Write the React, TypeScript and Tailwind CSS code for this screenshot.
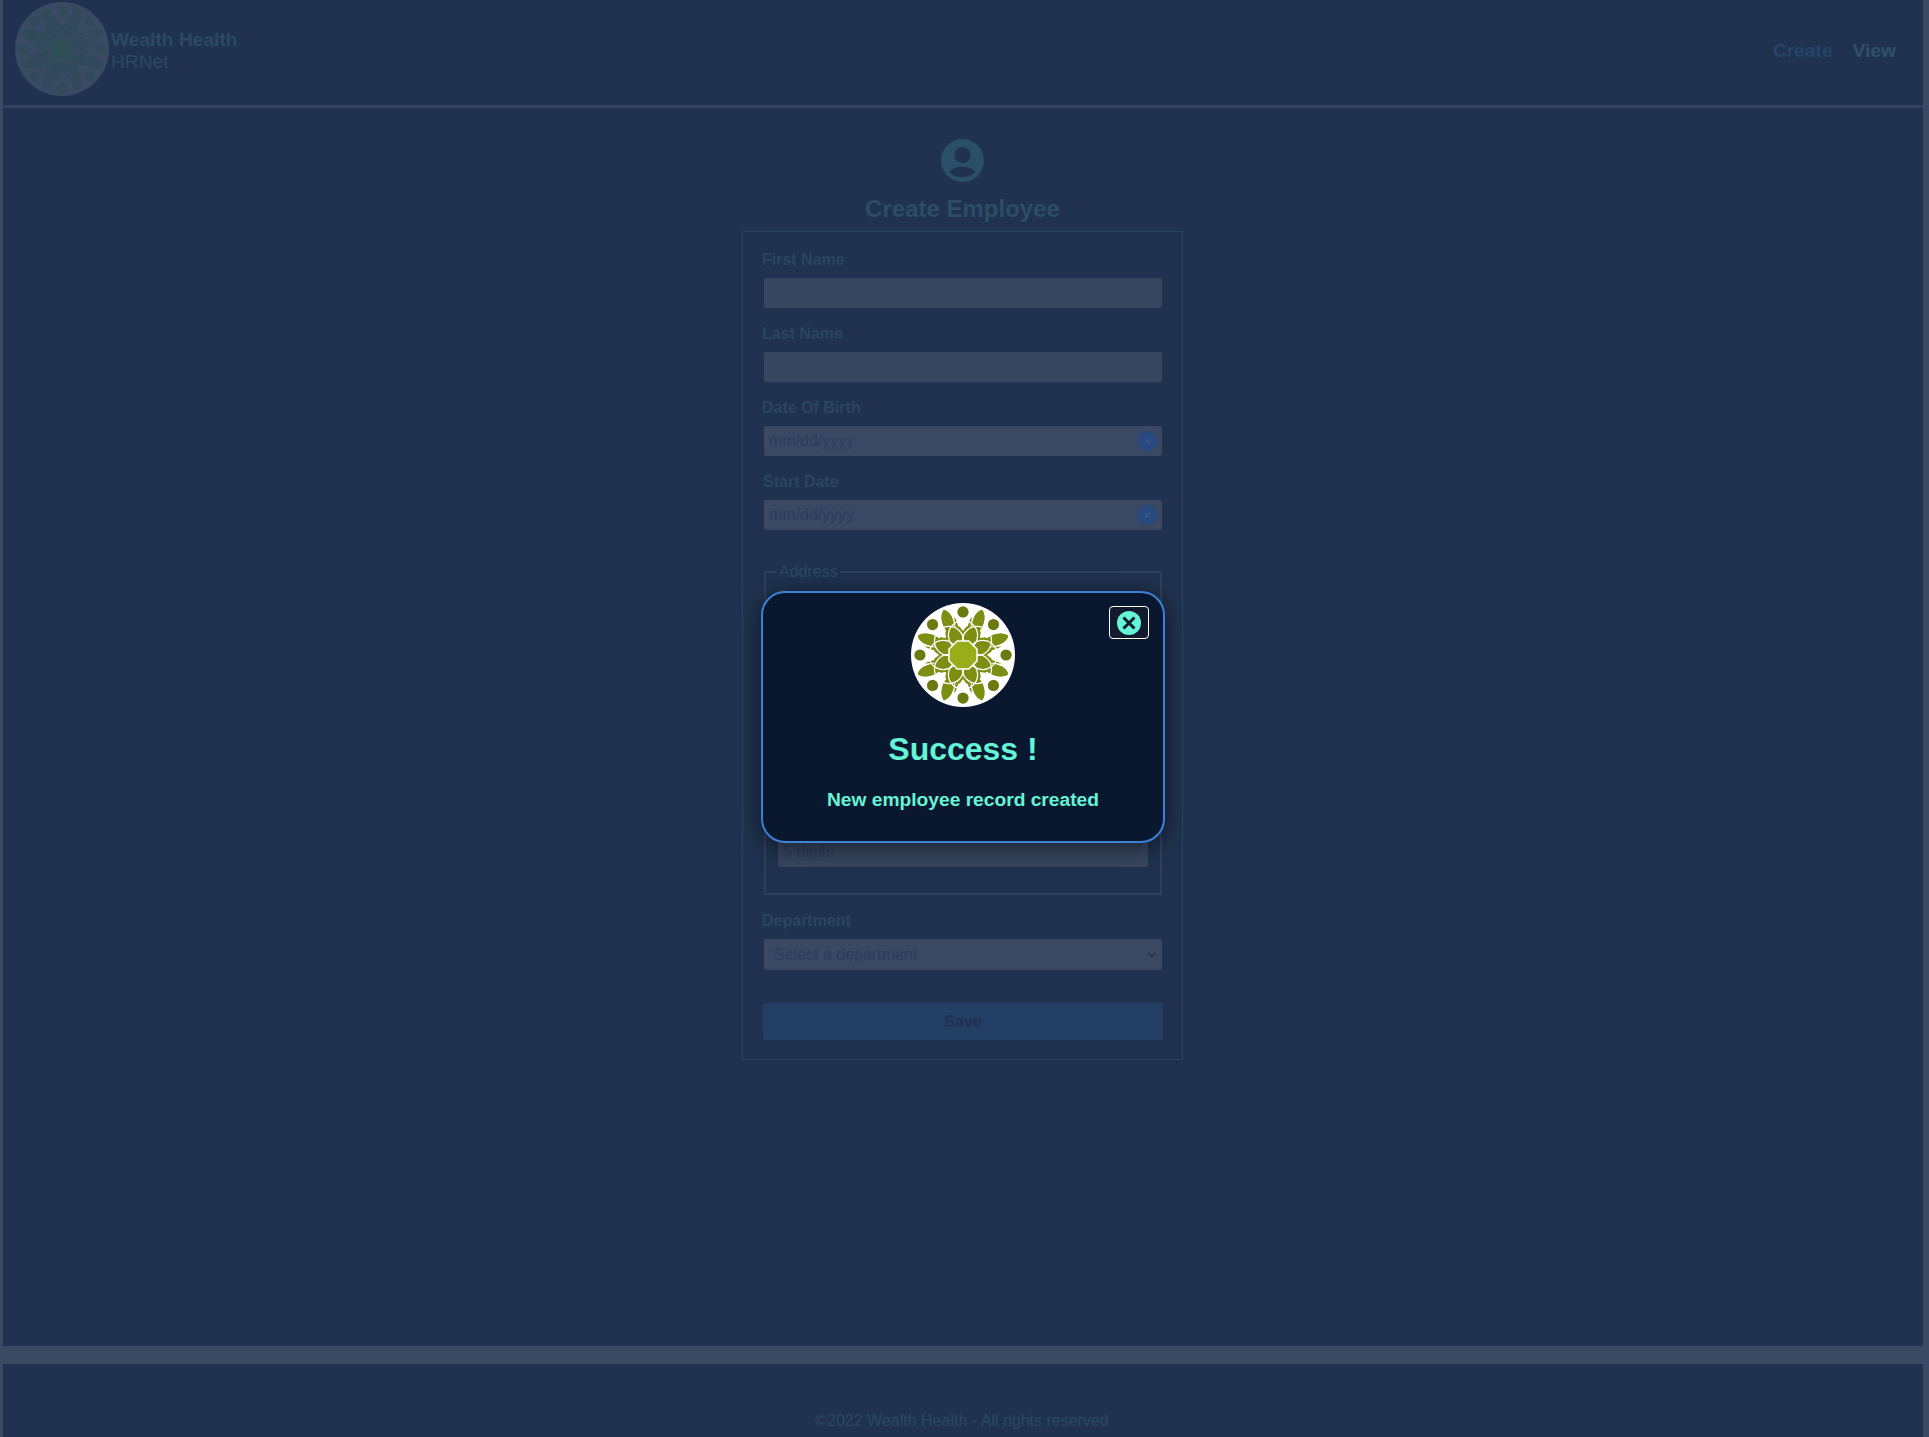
import React from "react";

const font = { fontFamily: '"Liberation Sans", Arial, sans-serif' };

// eight-fold company mark, used dimmed in the header and bright in the modal
function Logo({ className, paper, leaf, dot, core }: { className: string; paper: string; leaf: string; dot: string; core: string }) {
  const eight = [0, 45, 90, 135, 180, 225, 270, 315];
  const four = [0, 90, 180, 270];
  return (
    <svg viewBox="0 0 100 100" className={className}>
      <circle cx="50" cy="50" r="50" fill={paper} />
      <circle cx="50" cy="50" r="28" fill={leaf} />
      {eight.map((a) => (
        <path key={a} d="M50 27 L45.5 21 L54.5 21 Z" fill={paper} transform={`rotate(${a} 50 50)`} />
      ))}
      {four.map((a) => (
        <g key={a} transform={`rotate(${a} 50 50)`}>
          {/* long leaves */}
          <path d="M31.5 6.5 C38 8 42 16 42 29 L36 29 C30 23 27 13 31.5 6.5 Z" fill={leaf} />
          <path d="M68.5 6.5 C62 8 58 16 58 29 L64 29 C70 23 73 13 68.5 6.5 Z" fill={leaf} />
          <path d="M6.5 31.5 C8 38 16 42 29 42 L29 36 C23 30 13 27 6.5 31.5 Z" fill={leaf} />
          <path d="M6.5 68.5 C8 62 16 58 29 58 L29 64 C23 70 13 73 6.5 68.5 Z" fill={leaf} />
          {/* slivers beside them */}
          <path d="M41.5 13 C44.5 17 46 23 46 30 L43.5 30 C43 24 42 18 41.5 13 Z" fill={leaf} />
          <path d="M58.5 13 C55.5 17 54 23 54 30 L56.5 30 C57 24 58 18 58.5 13 Z" fill={leaf} />
        </g>
      ))}
      {/* interlaced arcs cut the ring into cells */}
      {eight.map((a) => (
        <circle key={a} cx="50" cy="31" r="14" fill="none" stroke={paper} strokeWidth="1.2" transform={`rotate(${a} 50 50)`} />
      ))}
      {eight.map((a) => (
        <circle key={a} cx="50" cy="8.6" r="5.4" fill={dot} transform={`rotate(${a} 50 50)`} />
      ))}
      <polygon points="44.4,36.5 55.6,36.5 63.5,44.4 63.5,55.6 55.6,63.5 44.4,63.5 36.5,55.6 36.5,44.4" fill={core} stroke={paper} strokeWidth="1.4" />
    </svg>
  );
}

function Field({ label, children, className = "", labelClass = "" }: { label: string; children: React.ReactNode; className?: string; labelClass?: string }) {
  return (
    <div className={`flex flex-col ${className}`}>
      <label className={`block h-[18px] text-[16px] leading-[20px] font-bold text-[#2a4660] ${labelClass}`}>{label}</label>
      {children}
    </div>
  );
}

function TextBox({ placeholder, inner }: { placeholder?: string; inner?: boolean }) {
  return (
    <div className={`mt-[10px] flex h-[30px] items-center rounded-[2px] bg-[#37465f] px-[5px] text-[16px] text-[#2c3d5a] ${inner ? "" : "ml-[2px] mr-[1px]"}`}>
      {placeholder}
    </div>
  );
}

function DateBox() {
  return (
    <div className="ml-[2px] mr-[1px] mt-[10px] flex h-[30px] items-center justify-between rounded-[2px] bg-[#3a4863] pl-[5px] pr-[5px] text-[16px] text-[#2c3d5a]">
      <span>mm/dd/yyyy</span>
      <span className="flex h-5 w-5 items-center justify-center rounded-full bg-[#27497f]">
        <svg viewBox="0 0 10 10" className="h-[7px] w-[7px]" stroke="#3a5a8c" strokeWidth="1.5">
          <path d="M1 1 9 9M9 1 1 9" />
        </svg>
      </span>
    </div>
  );
}

export default function App() {
  return (
    <div style={font} className="flex h-[1437px] flex-col overflow-hidden bg-[#20324f]">
      <div className="relative flex flex-1 flex-col border-l-[3px] border-r-[6px] border-[#3a4a64]">
        {/* header */}
        <header className="flex h-[108px] items-start justify-between border-b-[3px] border-[#33435f] pl-[12px] pr-[27px]">
          <div className="flex items-start">
            <Logo className="mt-[2px] h-[94px] w-[94px]" paper="#3a4a64" leaf="#304a5a" dot="#304a5a" core="#2f4f58" />
            <div className="mt-[29px] ml-[2px] text-[19.2px] leading-[22px] text-[#2a4a63]">
              <div className="font-bold">Wealth Health</div>
              <div>HRNet</div>
            </div>
          </div>
          <nav className="mt-[40px] flex gap-[20px] text-[19.2px] leading-[22px] font-bold">
            <a className="text-[#264468]">Create</a>
            <a className="text-[#2f5068]">View</a>
          </nav>
        </header>

        {/* main */}
        <main className="flex flex-1 flex-col items-center pr-[1px]">
          <svg viewBox="0 0 129 129" className="mt-[31px] h-[43px] w-[43px]">
            <circle cx="64.5" cy="64.5" r="64.5" fill="#295068" />
            <circle cx="64.5" cy="48" r="24" fill="#20324f" />
            <path d="M25 98 Q38 83 64.5 83 Q91 83 104 98 Q88 115 64.5 115 Q41 115 25 98 Z" fill="#20324f" />
          </svg>
          <h1 className="mt-[13px] h-[28px] text-[24px] leading-[28px] font-bold text-[#2b4d67]">Create Employee</h1>

          <form className="mt-[8px] flex w-[441px] flex-col border border-[#2b4560] px-[19px] pt-[18px] pb-[19px]">
            <Field label="First Name"><TextBox /></Field>
            <Field label="Last Name" className="mt-[16px]"><TextBox /></Field>
            <Field label="Date Of Birth" className="mt-[16px]"><DateBox /></Field>
            <Field label="Start Date" className="mt-[16px]" labelClass="pl-[1px]"><DateBox /></Field>

            <fieldset className="ml-[2px] mr-[1px] mt-[33px] border-2 border-[#2f405c] px-[12px] pt-[6px] pb-[26px]">
              <legend className="ml-[-1px] px-[2px] text-[16px] leading-[18px] text-[#2b4a62]">Address</legend>
              <Field label="Street"><TextBox inner /></Field>
              <Field label="City" className="mt-[16px]"><TextBox inner /></Field>
              <Field label="State" className="mt-[16px]"><TextBox inner /></Field>
              <Field label="Zip Code" className="mt-[16px]"><TextBox inner placeholder="5 digits" /></Field>
            </fieldset>

            <Field label="Department" className="mt-[16px]">
              <div className="ml-[2px] mr-[1px] mt-[10px] flex h-[31px] items-center justify-between rounded-[2px] bg-[#3a4863] pl-[10px] pr-[5px] text-[16px] text-[#2c3d5a]">
                <span>Select a department</span>
                <svg viewBox="0 0 12 8" className="h-[6px] w-[10px]" fill="none" stroke="#22324e" strokeWidth="2">
                  <path d="M1 1 6 6 11 1" />
                </svg>
              </div>
            </Field>

            <button type="button" className="ml-[1px] mt-[33px] h-[37px] rounded-[2px] bg-[#243f66] text-[16px] font-bold text-[#1f3050]">Save</button>
          </form>
        </main>

        {/* success modal */}
        <div className="absolute left-[758px] top-[591px] flex h-[252px] w-[404px] flex-col items-center rounded-[24px] border-2 border-[#3b82d6] bg-[#09172f] shadow-[0_4px_24px_rgba(0,0,0,0.55)]">
          <Logo className="mt-[10px] h-[104px] w-[104px]" paper="#ffffff" leaf="#7d8f12" dot="#6b7a10" core="#97ad1a" />
          <button type="button" className="absolute right-[14px] top-[13px] flex h-[33px] w-[40px] items-center justify-center rounded-[4px] border border-white bg-[#111a2e]">
            <svg viewBox="0 0 24 24" className="h-[24px] w-[24px]">
              <circle cx="12" cy="12" r="12" fill="#64f5d6" />
              <path d="M6.5 6.5 17.5 17.5M17.5 6.5 6.5 17.5" stroke="#0d1b33" strokeWidth="3" />
            </svg>
          </button>
          <h2 className="mt-[24px] text-[32px] leading-[37px] font-bold text-[#64f5d6]">Success !</h2>
          <p className="mt-[21px] text-[19.2px] leading-[22px] font-bold text-[#64f5d6]">New employee record created</p>
        </div>
      </div>

      {/* footer */}
      <div className="h-[18px] bg-[#3a4a64]" />
      <footer className="flex h-[73px] items-start justify-center border-l-[3px] border-r-[6px] border-[#3a4a64] pr-[2px] pt-[48px] text-[16px] leading-[18px] text-[#2a4a63]">
        ©2022 Wealth Health - All rights reserved
      </footer>
    </div>
  );
}
